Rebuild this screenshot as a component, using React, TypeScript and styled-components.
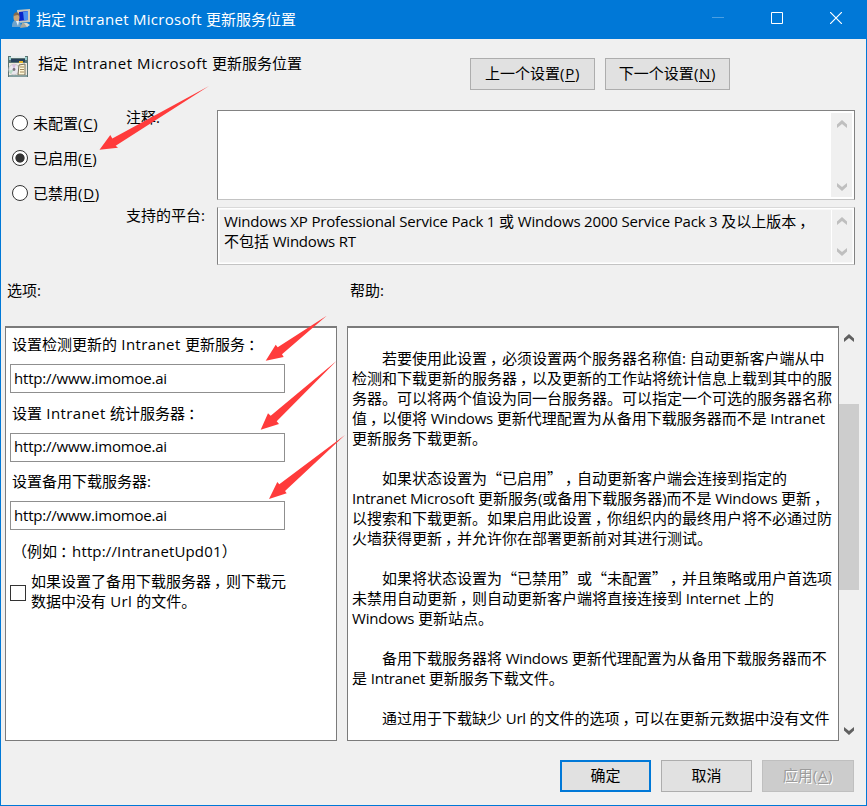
import React from "react";
import styled, { createGlobalStyle } from "styled-components";

const Global = createGlobalStyle`
  * { box-sizing: border-box; }
  html, body { margin: 0; padding: 0; }
  body {
    font-family: "Open Sans", "Noto Sans CJK SC", sans-serif;
    font-size: 15px;
    line-height: 20px;
    color: #000;
    text-spacing-trim: space-all;
  }
`;

const Window = styled.div`
  position: relative;
  width: 867px;
  height: 806px;
  overflow: hidden;
  background: #f0f0f0;
  border: 1px solid #0078d7;
  display: flex;
  flex-direction: column;
`;

const TitleBar = styled.header`
  height: 38px;
  flex: none;
  display: flex;
  align-items: center;
  background: #0078d7;
  color: #fff;
  padding: 0 0 2px 10px;
`;

const TitleText = styled.span`
  flex: 1;
  padding-left: 5px;
  white-space: nowrap;
`;

const Controls = styled.div`
  display: flex;
  align-items: center;
  height: 34px;
  align-self: flex-start;
`;

const Control = styled.button`
  width: 59px;
  height: 32px;
  padding: 0 1px 0 0;
  border: 0;
  background: transparent;
  display: flex;
  align-items: center;
  justify-content: center;
`;

const Run = styled.span<{ $ls: number }>`
  font-family: "Open Sans", "Noto Sans CJK SC", sans-serif;
  letter-spacing: ${(p) => p.$ls}px;
`;

const Cjk = styled.span`
  font-family: "Noto Sans CJK SC", sans-serif;
`;

const Mark = styled.span`
  font-family: "Noto Sans CJK SC", sans-serif;
  padding-left: 3px;
  letter-spacing: -3px;
`;

const Line = styled.div<{ $indent?: boolean }>`
  height: 20px;
  line-height: 20px;
  white-space: pre;
  padding-left: ${(p) => (p.$indent ? 30 : 0)}px;
`;

/* Latin runs, full-width punctuation and Chinese text are spaced differently. */
function Mixed({ text, ls = -0.22 }: { text: string; ls?: number }) {
  const parts = text.match(/[\u0020-\u007e]+|[，：]|[^\u0020-\u007e，：]+/g) || [];
  return (
    <>
      {parts.map((part, i) => {
        if (part === "，" || part === "：") return <Mark key={i}>{part}</Mark>;
        if (/^[\u0020-\u007e]/.test(part)) return <Run key={i} $ls={ls}>{part}</Run>;
        return <Cjk key={i}>{part}</Cjk>;
      })}
    </>
  );
}

const Header = styled.section`
  height: 71px;
  flex: none;
  display: flex;
  align-items: flex-start;
  padding: 0 0 0 7px;
`;

const HeaderIcon = styled.div`
  flex: none;
  width: 22px;
  height: 22px;
  margin-top: 17px;
`;

const Heading = styled.div`
  flex: none;
  width: 440px;
  padding: 14px 0 0 8px;
  white-space: nowrap;
`;

const HeaderButtons = styled.div`
  display: flex;
  gap: 10px;
  padding-top: 19px;
`;

const Button = styled.button<{ $w: number; $kind?: "primary" | "disabled" }>`
  width: ${(p) => p.$w}px;
  height: 32px;
  padding: 0 0 2px;
  font: inherit;
  letter-spacing: 0;
  color: ${(p) => (p.$kind === "disabled" ? "#9b9b9b" : "#000")};
  text-shadow: ${(p) => (p.$kind === "disabled" ? "1px 1px 0 #fff" : "none")};
  background: ${(p) => (p.$kind === "disabled" ? "#ccc" : "#e1e1e1")};
  border: ${(p) =>
    p.$kind === "primary" ? "2px solid #0078d7" : p.$kind === "disabled" ? "1px solid #bfbfbf" : "1px solid #adadad"};
`;

const Accel = styled.span`
  letter-spacing: 0.7px;
`;

const Key = styled.span`
  text-decoration: underline;
  text-underline-offset: 2px;
`;

const Form = styled.section`
  height: 156px;
  flex: none;
  display: grid;
  grid-template-columns: 125px 91px 638px;
`;

const Radios = styled.div`
  padding: 3px 0 0 11px;
  display: flex;
  flex-direction: column;
  gap: 15px;
`;

const RadioLabel = styled.label`
  display: flex;
  align-items: center;
  gap: 5px;
  height: 20px;
  white-space: nowrap;
`;

const RadioDot = styled.span<{ $on?: boolean }>`
  width: 16px;
  height: 16px;
  border-radius: 50%;
  border: 1.4px solid #333;
  background: ${(p) => (p.$on ? "radial-gradient(circle, #333 0 4.2px, #fff 5px)" : "#fff")};
`;

const FieldNames = styled.div`
  display: flex;
  flex-direction: column;
  gap: 78px;
  margin-top: -3px;
`;

const Boxes = styled.div`
  display: flex;
  flex-direction: column;
  gap: 7px;
`;

const TextBox = styled.div<{ $h: number; $readonly?: boolean }>`
  height: ${(p) => p.$h}px;
  display: flex;
  justify-content: space-between;
  background: ${(p) => (p.$readonly ? "#f0f0f0" : "#fff")};
  border: 1px solid #828282;
  border-top-color: ${(p) => (p.$readonly ? "#d9d9d9" : "#828282")};
  border-bottom-color: #c3c3c3;
  box-shadow: inset 0 0 0 ${(p) => (p.$readonly ? 1.5 : 0)}px #fff;
  padding: 2px;
`;

const BoxText = styled.div`
  padding: 1px 0 0 4px;
`;

const MiniScroll = styled.div<{ $line?: boolean }>`
  width: 21px;
  flex: none;
  display: flex;
  flex-direction: column;
  align-items: center;
  justify-content: space-between;
  padding: 7px 0 6px;
  background: #f0f0f0;
  border-left: ${(p) => (p.$line ? "1px solid #fff" : "0")};
`;

const Captions = styled.div`
  height: 60px;
  flex: none;
  display: grid;
  grid-template-columns: 343px 1fr;
  padding: 14px 0 0 6px;
`;

const Panels = styled.main`
  height: 415px;
  flex: none;
  display: flex;
  padding-left: 4px;
`;

const Panel = styled.section`
  background: #fff;
  border: 1px solid #7b7b7b;
  border-top-width: 2px;
`;

const OptionsPanel = styled(Panel)`
  width: 332px;
  padding: 6px 0 0 4px;
`;

const OptionLabel = styled.div`
  height: 20px;
  padding-left: 2px;
  white-space: pre;
`;

const Input = styled.input`
  display: block;
  width: 275px;
  height: 29px;
  margin: 10px 0 9.5px;
  padding: 0 4px 2px 3px;
  border: 1px solid #8f8f8f;
  font: inherit;
  letter-spacing: -0.2px;
  outline: 0;
`;

const Example = styled.div`
  height: 20px;
  padding-left: 2px;
  margin-top: 10.5px;
  white-space: pre;
`;

const CheckRow = styled.label`
  display: flex;
  align-items: center;
  gap: 5px;
  margin-top: 10.5px;
`;

const CheckBox = styled.span`
  width: 16px;
  height: 16px;
  margin-top: 3px;
  flex: none;
  background: #fff;
  border: 1px solid #333;
`;

const HelpPanel = styled(Panel)`
  width: 492px;
  margin-left: 10px;
  padding: 20px 0 0 4px;
`;

const ScrollBar = styled.div`
  width: 20px;
  display: flex;
  flex-direction: column;
  align-items: center;
  padding: 8px 0 6px;
`;

const Thumb = styled.div`
  width: 20px;
  height: 186px;
  margin: 62px 0 auto;
  background: #cdcdcd;
`;

const Footer = styled.footer`
  display: flex;
  gap: 10px;
  padding: 19px 12px 0 0;
  justify-content: flex-end;
`;

const Arrows = styled.svg`
  position: absolute;
  left: -1px;
  top: -1px;
  pointer-events: none;
`;

const Chevron = ({ down, color = "#bfbfbf" }: { down?: boolean; color?: string }) => (
  <svg width="10" height="8" viewBox="0 0 10 8">
    <path
      d={down ? "M0 0l5 4 5-4v3.4L5 8 0 3.4z" : "M0 8l5-4 5 4V4.6L5 0 0 4.6z"}
      fill={color}
    />
  </svg>
);

const ComputerIcon = () => (
  <svg width="20" height="20" viewBox="0 0 20 20">
    <path d="M6 1l13-1v13l-12 1z" fill="#c9c8bd" />
    <path d="M8 3l9-1v9L8 12z" fill="#0824c8" />
    <path d="M12 3l5-1v9l-4 .4z" fill="#4a8ff0" />
    <path d="M11 14h4l2 4-8 1z" fill="#aaa99d" />
    <path d="M13 14h3l3 2-3 2z" fill="#d9d8ce" />
    <ellipse cx="5.5" cy="8.5" rx="3" ry="4" fill="#c8a477" />
    <path d="M2.5 7c0-5 6-5 6 0l-2-1z" fill="#806a50" />
    <path d="M1 18c0-6 2-7 5-6 3 0 4 2 4 6z" fill="#6ea3cc" />
    <path d="M5 12l2 5 1-5z" fill="#e7f2fa" />
  </svg>
);

const PolicyIcon = () => (
  <svg width="21" height="21" viewBox="1 0 21 21">
    <path d="M1 0h20v21H1z" fill="#5b7474" />
    <path d="M2 1h2v3H2zM18 1h2v3h-2z" fill="#9bd0d0" />
    <path d="M4 0h14v2H4z" fill="#e6eeee" />
    <path d="M4 3h14v3H4z" fill="#26415b" />
    <path d="M12 5h4v2h-4z" fill="#e9b72c" />
    <path d="M2 7h18v12H2z" fill="#eeeae0" />
    <circle cx="7" cy="13.5" r="5.3" fill="#e9e7ee" stroke="#bbb" strokeWidth=".7" />
    <path d="M7 13.5L5 8.8a5 5 0 014-.2z" fill="#d9c0df" />
    <path d="M7 13.5l-4.8 1A5 5 0 004 18z" fill="#b8dbc6" />
    <circle cx="7" cy="13.5" r="1.4" fill="#776f7d" />
    <path d="M12 9l6-1v11h-7z" fill="#fff8d8" stroke="#77705c" />
    <path d="M13 11h4M13 13.5h4M13 16h4" stroke="#a2875b" />
    <path d="M2 20h18" stroke="#b1cccc" />
  </svg>
);

const helpLines: { text: string; indent?: boolean }[] = [
  { text: "若要使用此设置，必须设置两个服务器名称值: 自动更新客户端从中", indent: true },
  { text: "检测和下载更新的服务器，以及更新的工作站将统计信息上载到其中的服" },
  { text: "务器。可以将两个值设为同一台服务器。可以指定一个可选的服务器名称" },
  { text: "值，以便将 Windows 更新代理配置为从备用下载服务器而不是 Intranet" },
  { text: "更新服务下载更新。" },
  { text: "" },
  { text: "如果状态设置为“已启用”，自动更新客户端会连接到指定的", indent: true },
  { text: "Intranet Microsoft 更新服务(或备用下载服务器)而不是 Windows 更新，" },
  { text: "以搜索和下载更新。如果启用此设置，你组织内的最终用户将不必通过防" },
  { text: "火墙获得更新，并允许你在部署更新前对其进行测试。" },
  { text: "" },
  { text: "如果将状态设置为“已禁用”或“未配置”，并且策略或用户首选项", indent: true },
  { text: "未禁用自动更新，则自动更新客户端将直接连接到 Internet 上的" },
  { text: "Windows 更新站点。" },
  { text: "" },
  { text: "备用下载服务器将 Windows 更新代理配置为从备用下载服务器而不", indent: true },
  { text: "是 Intranet 更新服务下载文件。" },
  { text: "" },
  { text: "通过用于下载缺少 Url 的文件的选项，可以在更新元数据中没有文件", indent: true },
];

const arrowPaths = [
  "M99.5 149.7L110.3 135l2 3.5L209 86l-93.3 59.7 2.3 2z",
  "M265.7 360.7l10-16 2 2.6 49-31.6L282 354.3l1.7 2.7z",
  "M260.7 429.7l7.3-16.4 2.7 2.4 66-55-60 60.6 2.3 2.7z",
  "M269 499l8.3-17 2 2.3L345 435l-60 56 1.7 2.3z",
];

export default function App() {
  return (
    <Window>
      <Global />
      <TitleBar>
        <ComputerIcon />
        <TitleText><Mixed text="指定 Intranet Microsoft 更新服务位置" ls={0.3} /></TitleText>
        <Controls>
          <Control aria-label="minimize">
            <svg width="12" height="12"><path d="M0 5.5h12" stroke="#4a9fe3" /></svg>
          </Control>
          <Control aria-label="maximize">
            <svg width="12" height="12"><path d="M.5.5h11v11H.5z" fill="none" stroke="#fff" /></svg>
          </Control>
          <Control aria-label="close">
            <svg width="12" height="12"><path d="M0 0l12 12M12 0L0 12" stroke="#fff" strokeWidth="1.2" /></svg>
          </Control>
        </Controls>
      </TitleBar>

      <Header>
        <HeaderIcon><PolicyIcon /></HeaderIcon>
        <Heading><Mixed text="指定 Intranet Microsoft 更新服务位置" ls={0.5} /></Heading>
        <HeaderButtons>
          <Button $w={125}><Cjk>上一个设置</Cjk><Accel>(<Key>P</Key>)</Accel></Button>
          <Button $w={125}><Cjk>下一个设置</Cjk><Accel>(<Key>N</Key>)</Accel></Button>
        </HeaderButtons>
      </Header>

      <Form>
        <Radios>
          <RadioLabel><RadioDot /><span><Cjk>未配置</Cjk><Accel>(<Key>C</Key>)</Accel></span></RadioLabel>
          <RadioLabel><RadioDot $on /><span><Cjk>已启用</Cjk><Accel>(<Key>E</Key>)</Accel></span></RadioLabel>
          <RadioLabel><RadioDot /><span><Cjk>已禁用</Cjk><Accel>(<Key>D</Key>)</Accel></span></RadioLabel>
        </Radios>
        <FieldNames>
          <span><Mixed text="注释:" /></span>
          <span><Mixed text="支持的平台:" /></span>
        </FieldNames>
        <Boxes>
          <TextBox $h={90}>
            <BoxText />
            <MiniScroll><Chevron /><Chevron down /></MiniScroll>
          </TextBox>
          <TextBox $h={58} $readonly>
            <BoxText>
              <Line><Mixed text="Windows XP Professional Service Pack 1 或 Windows 2000 Service Pack 3 及以上版本，" ls={-0.17} /></Line>
              <Line><Mixed text="不包括 Windows RT" /></Line>
            </BoxText>
            <MiniScroll $line><Chevron /><Chevron down /></MiniScroll>
          </TextBox>
        </Boxes>
      </Form>

      <Captions>
        <span><Mixed text="选项:" /></span>
        <span><Mixed text="帮助:" /></span>
      </Captions>

      <Panels>
        <OptionsPanel>
          <OptionLabel><Mixed text="设置检测更新的 Intranet 更新服务：" ls={0.4} /></OptionLabel>
          <Input defaultValue="http://www.imomoe.ai" />
          <OptionLabel><Mixed text="设置 Intranet 统计服务器：" ls={0.4} /></OptionLabel>
          <Input defaultValue="http://www.imomoe.ai" />
          <OptionLabel><Mixed text="设置备用下载服务器:" /></OptionLabel>
          <Input defaultValue="http://www.imomoe.ai" />
          <Example><Mixed text="（例如：http://IntranetUpd01）" ls={0.15} /></Example>
          <CheckRow>
            <CheckBox />
            <div>
              <Line><Mixed text="如果设置了备用下载服务器，则下载元" /></Line>
              <Line><Mixed text="数据中没有 Url 的文件。" ls={0.3} /></Line>
            </div>
          </CheckRow>
        </OptionsPanel>
        <HelpPanel>
          {helpLines.map((line, i) => (
            <Line key={i} $indent={line.indent}><Mixed text={line.text} /></Line>
          ))}
        </HelpPanel>
        <ScrollBar>
          <Chevron color="#606060" />
          <Thumb />
          <Chevron down color="#606060" />
        </ScrollBar>
      </Panels>

      <Footer>
        <Button $w={91} $kind="primary"><Cjk>确定</Cjk></Button>
        <Button $w={91}><Cjk>取消</Cjk></Button>
        <Button $w={92} $kind="disabled" disabled><Cjk>应用</Cjk><Accel>(<Key>A</Key>)</Accel></Button>
      </Footer>

      <Arrows width="867" height="806" viewBox="0 0 867 806">
        {arrowPaths.map((d) => <path key={d} d={d} fill="#ff3b3b" />)}
      </Arrows>
    </Window>
  );
}
